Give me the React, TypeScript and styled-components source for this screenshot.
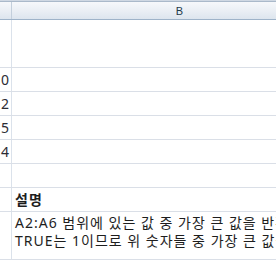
import styled, { createGlobalStyle } from "styled-components";

const GlobalStyle = createGlobalStyle`
  html, body {
    margin: 0;
    padding: 0;
    background: #fff;
    overflow: hidden;
  }
  body {
    font-family: "Noto Sans", "Noto Sans CJK KR", sans-serif;
  }
`;

const Sheet = styled.div`
  width: 360px;
  display: flex;
  flex-direction: column;
`;

const TopStrip = styled.div`
  height: 1px;
  background: #cfd8e3;
  border-bottom: 1px solid #aab9ca;
`;

const HeaderRow = styled.div`
  display: grid;
  grid-template-columns: 12px 336px;
  height: 17px;
  border-bottom: 1px solid #9eb3c9;
  background: linear-gradient(#f6f8fb, #e9eef4 55%, #dde5ee);
`;

const HeaderCell = styled.div`
  display: flex;
  align-items: center;
  justify-content: center;
  border-right: 1px solid #c3cfdc;
  font-family: "Liberation Sans", Arial, sans-serif;
  font-size: 11px;
  color: #1f3a4a;
`;

const Row = styled.div<{ $h: number }>`
  display: grid;
  grid-template-columns: 12px 336px;
  height: ${(p) => p.$h - 1}px;
  border-bottom: 1px solid #dadfe7;
`;

const NumCell = styled.div`
  display: flex;
  align-items: flex-end;
  justify-content: flex-end;
  padding: 0 2px 3px 0;
  border-right: 1px solid #dbe2eb;
  font-size: 14px;
  line-height: 17px;
  color: #2c2c34;
  white-space: nowrap;
`;

const TextCell = styled.div<{ $top?: boolean; $bold?: boolean }>`
  display: flex;
  flex-direction: column;
  justify-content: ${(p) => (p.$top ? "flex-start" : "flex-end")};
  padding: ${(p) => (p.$top ? "2px 0 0 3px" : "0 0 2px 3px")};
  font-size: 14px;
  line-height: 18px;
  letter-spacing: 1px;
  font-weight: ${(p) => (p.$bold ? 700 : 400)};
  color: #1e1e1e;
  white-space: nowrap;
  overflow: hidden;
`;

const rows = [
  { h: 48, num: "" },
  { h: 24, num: "0" },
  { h: 24, num: "2" },
  { h: 24, num: "5" },
  { h: 24, num: "4" },
  { h: 24, num: "" },
];

export default function App() {
  return (
    <>
      <GlobalStyle />
      <Sheet>
        <TopStrip />
        <HeaderRow>
          <HeaderCell />
          <HeaderCell>B</HeaderCell>
        </HeaderRow>
        {rows.map((r, i) => (
          <Row key={i} $h={r.h}>
            <NumCell>{r.num}</NumCell>
            <TextCell />
          </Row>
        ))}
        <Row $h={24}>
          <NumCell />
          <TextCell $bold>설명</TextCell>
        </Row>
        <Row $h={48}>
          <NumCell />
          <TextCell $top>
            <span>A2:A6 범위에 있는 값 중 가장 큰 값을 반환합니다.</span>
            <span>TRUE는 1이므로 위 숫자들 중 가장 큰 값을 반환합니다.</span>
          </TextCell>
        </Row>
      </Sheet>
    </>
  );
}
